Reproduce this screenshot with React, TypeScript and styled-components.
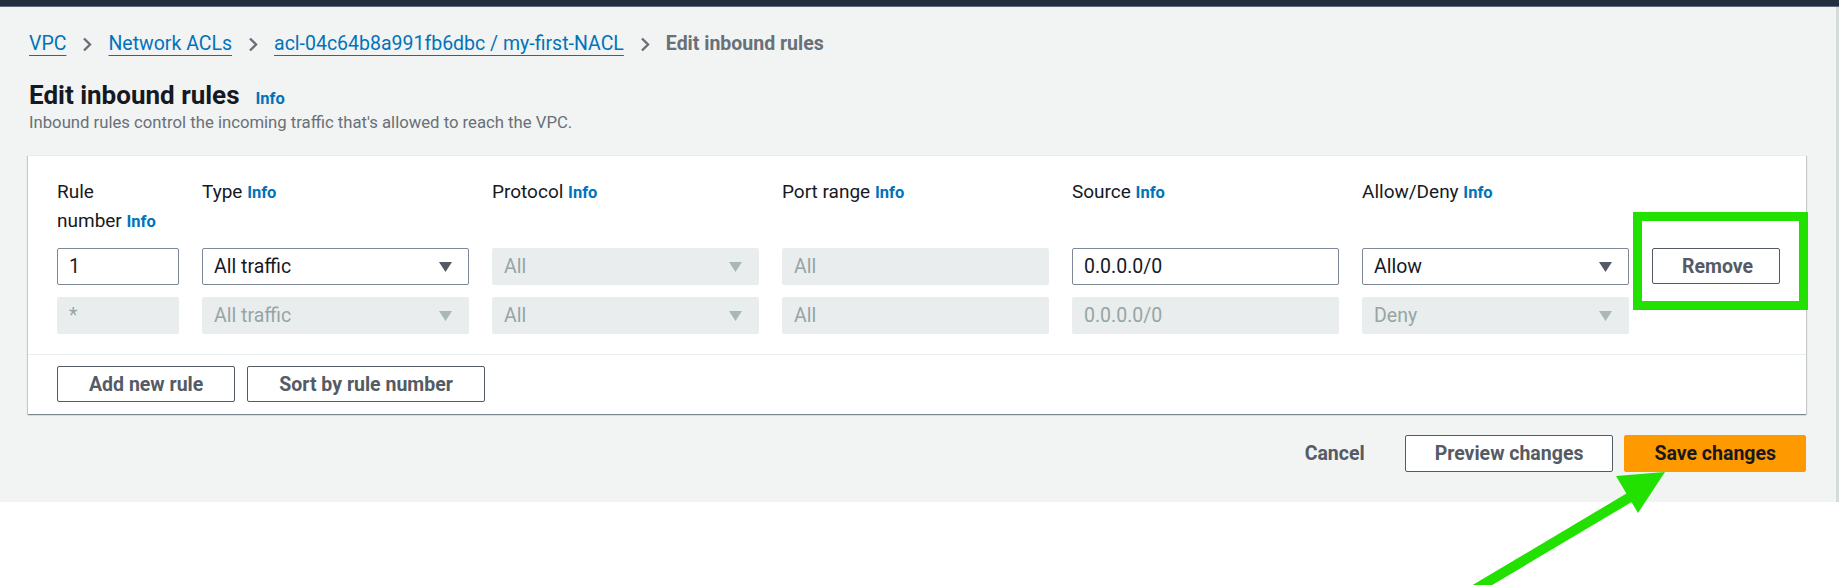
import styled, {createGlobalStyle} from "styled-components";

const GlobalStyle = createGlobalStyle`
  html, body {
    margin: 0;
    padding: 0;
    background: #ffffff;
  }

  body {
    font-family: Roboto, "Noto Sans", sans-serif;
    color: #16191f;
  }
`

const crumbs = [
    {label: 'VPC', link: true},
    {label: 'Network ACLs', link: true},
    {label: 'acl-04c64b8a991fb6dbc / my-first-NACL', link: true},
    {label: 'Edit inbound rules', link: false},
]

const columns = ['Type', 'Protocol', 'Port range', 'Source', 'Allow/Deny']

const Chevron = () => (
    <svg width="10" height="15" viewBox="0 0 10 15">
        <polyline points="2,1.5 8,7.5 2,13.5" fill="none" stroke="#687078" strokeWidth="2.4"/>
    </svg>
)

const Caret = ({muted}: { muted?: boolean }) => (
    <SCaret width="13" height="10" viewBox="0 0 13 10">
        <polygon points="0,0 13,0 6.5,10" fill={muted ? '#aab7b8' : '#545b64'}/>
    </SCaret>
)

const Field = ({value, select, disabled}: { value: string, select?: boolean, disabled?: boolean }) => (
    <SField $disabled={disabled}>
        <span>{value}</span>
        {select && <Caret muted={disabled}/>}
    </SField>
)

// label text with the last word kept together with its Info link
const Label = ({text}: { text: string }) => {
    const words = text.split(' ')
    const last = words.pop()
    return <SLabel>
        {words.length > 0 && words.join(' ') + ' '}
        <SNoWrap>{last} <SInfo>Info</SInfo></SNoWrap>
    </SLabel>
}

const App = () => {
    return <SRoot>
        <GlobalStyle/>
        <STopBar/>
        <SPage>
            <SBreadcrumbs>
                {crumbs.map((c, i) => <SCrumbItem key={c.label}>
                    {i > 0 && <Chevron/>}
                    {c.link ? <SCrumbLink>{c.label}</SCrumbLink> : <SCrumbCurrent>{c.label}</SCrumbCurrent>}
                </SCrumbItem>)}
            </SBreadcrumbs>

            <STitleRow>
                <STitle>Edit inbound rules</STitle>
                <SInfo>Info</SInfo>
            </STitleRow>
            <SDescription>Inbound rules control the incoming traffic that's allowed to reach the VPC.</SDescription>

            <SCard>
                <SRulesGrid>
                    <Label text="Rule number"/>
                    {columns.map(c => <Label key={c} text={c}/>)}
                    <span/>

                    <Field value="1"/>
                    <Field value="All traffic" select/>
                    <Field value="All" select disabled/>
                    <Field value="All" disabled/>
                    <Field value="0.0.0.0/0"/>
                    <Field value="Allow" select/>
                    <SButton>Remove</SButton>

                    <Field value="*" disabled/>
                    <Field value="All traffic" select disabled/>
                    <Field value="All" select disabled/>
                    <Field value="All" disabled/>
                    <Field value="0.0.0.0/0" disabled/>
                    <Field value="Deny" select disabled/>
                    <span/>
                </SRulesGrid>
                <SCardFooter>
                    <SButton $wide>Add new rule</SButton>
                    <SButton $wide>Sort by rule number</SButton>
                </SCardFooter>
            </SCard>

            <SActions>
                <SLinkButton>Cancel</SLinkButton>
                <SButton $tall>Preview changes</SButton>
                <SButton $tall $primary>Save changes</SButton>
            </SActions>
        </SPage>

        <SHighlight/>
        <SArrow width="220" height="125" viewBox="0 0 220 125">
            <line x1="14" y1="130" x2="172" y2="36" stroke="#22e000" strokeWidth="10"/>
            <polygon points="156,16 205,12 178,53" fill="#22e000"/>
        </SArrow>
    </SRoot>
}

const SRoot = styled.div`
  position: relative;
  width: 1839px;
  height: 585px;
  overflow: hidden;
  background: #ffffff;
`

const STopBar = styled.div`
  height: 6px;
  background: #232f3e;
  border-bottom: 1px solid #5f6b7a;
`

const SPage = styled.main`
  background: #f2f3f3;
  padding: 26px 30px 30px 28px;
  border-right: 3px solid #d5dbdb;
`

const SBreadcrumbs = styled.nav`
  display: flex;
  align-items: center;
  gap: 16px;
  height: 22px;
  padding-left: 1px;
  font-size: 19.5px;
`

const SCrumbItem = styled.div`
  display: flex;
  align-items: center;
  gap: 16px;
`

const SCrumbLink = styled.a`
  color: #0073bb;
  text-decoration: underline;
  text-decoration-thickness: 1px;
  text-underline-offset: 5px;
  line-height: 22px;
`

const SCrumbCurrent = styled.span`
  color: #687078;
  font-weight: 700;
  line-height: 22px;
`

const STitleRow = styled.div`
  display: flex;
  align-items: baseline;
  gap: 16px;
  margin-top: 25px;
  padding-left: 1px;
`

const STitle = styled.h1`
  margin: 0;
  font-size: 26px;
  line-height: 30px;
  font-weight: 700;
  color: #16191f;
`

const SInfo = styled.span`
  color: #0073bb;
  font-size: 16.5px;
  font-weight: 700;
`

const SDescription = styled.p`
  margin: 2px 0 0;
  padding-left: 1px;
  font-size: 16.7px;
  line-height: 22px;
  color: #687078;
`

const SCard = styled.section`
  margin-top: 21px;
  background: #ffffff;
  border-top: 1px solid #eaeded;
  box-shadow: 0 1px 1px 0 rgba(0, 28, 36, .3), 1px 1px 1px 0 rgba(0, 28, 36, .15), -1px 1px 1px 0 rgba(0, 28, 36, .15);
`

const SRulesGrid = styled.div`
  display: grid;
  grid-template-columns: 122px repeat(5, 267px) 128px;
  column-gap: 23px;
  row-gap: 12px;
  padding: 21px 20px 20px 29px;
  border-bottom: 1px solid #eaeded;
`

const SLabel = styled.div`
  font-size: 19px;
  line-height: 29px;
  color: #16191f;
`

const SNoWrap = styled.span`
  white-space: nowrap;
`

const SField = styled.div<{ $disabled?: boolean }>`
  display: flex;
  align-items: center;
  justify-content: space-between;
  box-sizing: border-box;
  height: 37px;
  padding: 0 16px 0 11px;
  border-radius: 2px;
  font-size: 19.5px;
  border: 1px solid ${({$disabled}) => $disabled ? '#eaeded' : '#7d8998'};
  background: ${({$disabled}) => $disabled ? '#eaeded' : '#ffffff'};
  color: ${({$disabled}) => $disabled ? '#95a5a6' : '#16191f'};
`

const SCaret = styled.svg`
  flex: none;
`

const SCardFooter = styled.div`
  display: flex;
  gap: 12px;
  padding: 11px 29px 12px;
`

const SButton = styled.button<{ $tall?: boolean, $primary?: boolean, $wide?: boolean }>`
  box-sizing: border-box;
  height: ${({$tall}) => $tall ? 37 : 36}px;
  padding: 0 ${({$wide}) => $wide ? 31 : 29}px;
  border-radius: 2px;
  font-family: Roboto, "Noto Sans", sans-serif;
  font-size: 19.5px;
  font-weight: 700;
  cursor: pointer;
  border: 1px solid ${({$primary}) => $primary ? '#ff9900' : '#545b64'};
  background: ${({$primary}) => $primary ? '#ff9900' : '#ffffff'};
  color: ${({$primary}) => $primary ? '#16191f' : '#545b64'};
`

const SLinkButton = styled.button`
  height: 37px;
  padding: 0 20px;
  margin-right: 9px;
  border: none;
  background: transparent;
  font-family: Roboto, "Noto Sans", sans-serif;
  font-size: 19.5px;
  font-weight: 700;
  color: #545b64;
`

const SActions = styled.div`
  display: flex;
  justify-content: flex-end;
  align-items: center;
  gap: 11px;
  margin-top: 21px;
`

const SHighlight = styled.div`
  position: absolute;
  left: 1633px;
  top: 212px;
  width: 175px;
  height: 98px;
  box-sizing: border-box;
  border: 9px solid #22e000;
  pointer-events: none;
`

const SArrow = styled.svg`
  position: absolute;
  left: 1460px;
  top: 460px;
  pointer-events: none;
`

export default App
